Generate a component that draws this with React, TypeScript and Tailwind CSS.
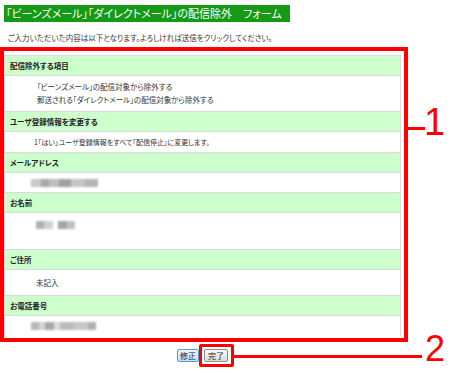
import React from "react";

const jp = { fontFamily: '"Noto Sans CJK JP", "Noto Sans", sans-serif' };

function Head({ children }: { children: React.ReactNode }) {
  return (
    <div className="h-[20px] bg-[#ccffcc] border-b border-[#d9d9d9] flex items-center pl-[5px] text-[7.5px] font-bold text-[#222] leading-none">
      {children}
    </div>
  );
}

function Blur({ w, shade }: { w: number; shade: string }) {
  return <div className={`h-[8px] ${shade}`} style={{ width: w }} />;
}

export default function App() {
  return (
    <div className="w-[450px] h-[373px] bg-white relative overflow-hidden [font-feature-settings:'palt']" style={jp}>
      <div className="ml-[4px] mt-[5px] w-[286px] h-[17px] bg-[#169a16] text-white text-[11px] leading-none flex items-center pl-[2px]">
        「ビーンズメール」「ダイレクトメール」の配信除外　フォーム
      </div>
      <div className="mt-[11px] pl-[8px] h-[10px] text-[7.5px] leading-[10px] text-[#333]">
        ご入力いただいた内容は以下となります。よろしければ送信をクリックしてください。
      </div>
      <div className="mt-[4px] w-[408px] h-[295px] border-4 border-[#ff0000] pt-[4px] pr-[3px] overflow-hidden">
        <div className="border border-[#dcdcdc] border-b-0 text-[#333]">
          <Head>配信除外する項目</Head>
          <div className="h-[36px] border-b border-[#d9d9d9] pl-[32px] pt-[4px] text-[7.5px] leading-[13px]">
            <div>「ビーンズメール」の配信対象から除外する</div>
            <div>郵送される「ダイレクトメール」の配信対象から除外する</div>
          </div>
          <Head>ユーザ登録情報を変更する</Head>
          <div className="h-[21px] border-b border-[#d9d9d9] pl-[29px] flex items-center text-[7px]">
            1「はい」ユーザ登録情報をすべて「配信停止」に変更します。
          </div>
          <Head>メールアドレス</Head>
          <div className="h-[20px] border-b border-[#d9d9d9] pl-[26px] flex items-center">
            <div className="flex blur-[1px]">
              <Blur w={10} shade="bg-[#c8c8c8]" />
              <Blur w={8} shade="bg-[#a8a8a8]" />
              <Blur w={10} shade="bg-[#bdbdbd]" />
              <Blur w={12} shade="bg-[#a0a0a0]" />
              <Blur w={14} shade="bg-[#c4c4c4]" />
              <Blur w={13} shade="bg-[#b4b4b4]" />
            </div>
          </div>
          <Head>お名前</Head>
          <div className="h-[37px] border-b border-[#d9d9d9] pl-[31px] pt-[8px] flex items-start gap-[5px]">
            <div className="flex blur-[1px]">
              <Blur w={8} shade="bg-[#b0b0b0]" />
              <Blur w={9} shade="bg-[#d0d0d0]" />
            </div>
            <div className="flex blur-[1px]">
              <Blur w={9} shade="bg-[#a4a4a4]" />
              <Blur w={8} shade="bg-[#c0c0c0]" />
            </div>
          </div>
          <Head>ご住所</Head>
          <div className="h-[26px] border-b border-[#d9d9d9] pl-[31px] flex items-center text-[7.5px]">
            未記入
          </div>
          <Head>お電話番号</Head>
          <div className="h-[20px] pl-[26px] flex items-center">
            <div className="flex blur-[1px]">
              <Blur w={8} shade="bg-[#b8b8b8]" />
              <Blur w={6} shade="bg-[#d4d4d4]" />
              <Blur w={9} shade="bg-[#a8a8a8]" />
              <Blur w={6} shade="bg-[#dadada]" />
              <Blur w={14} shade="bg-[#bcbcbc]" />
              <Blur w={14} shade="bg-[#c8c8c8]" />
              <Blur w={8} shade="bg-[#b0b0b0]" />
            </div>
          </div>
        </div>
      </div>
      <div className="mt-[7px] flex pl-[177px] items-start">
        <div className="w-[22px] h-[13px] border border-[#5a9fd4] rounded-[2px] bg-gradient-to-b from-[#eef5fb] to-[#c4def2] text-[8px] leading-none text-[#222] flex items-center justify-center">
          修正
        </div>
        <div className="ml-[5px] w-[24px] h-[13px] border border-[#8a8a8a] rounded-[2px] bg-gradient-to-b from-[#fafafa] to-[#dcdcdc] text-[8px] leading-none text-[#222] flex items-center justify-center">
          完了
        </div>
      </div>

      {/* annotations */}
      <div className="absolute left-[199px] top-[344px] w-[35px] h-[23px] border-[3px] border-[#ff0000] rounded-[2px]" />
      <div className="absolute left-[234px] top-[355px] w-[188px] h-[3px] bg-[#ff0000]" />
      <div
        className="absolute left-[425px] top-[331px] text-[36px] leading-none text-[#ff0000]"
        style={{ fontFamily: '"Liberation Sans", Arial, sans-serif' }}
      >
        2
      </div>
      <div className="absolute left-[408px] top-[127px] w-[17px] h-[3px] bg-[#ff0000]" />
      <div
        className="absolute left-[424px] top-[103px] text-[38px] leading-none text-[#ff0000]"
        style={{ fontFamily: '"Liberation Sans", Arial, sans-serif' }}
      >
        1
      </div>
    </div>
  );
}
